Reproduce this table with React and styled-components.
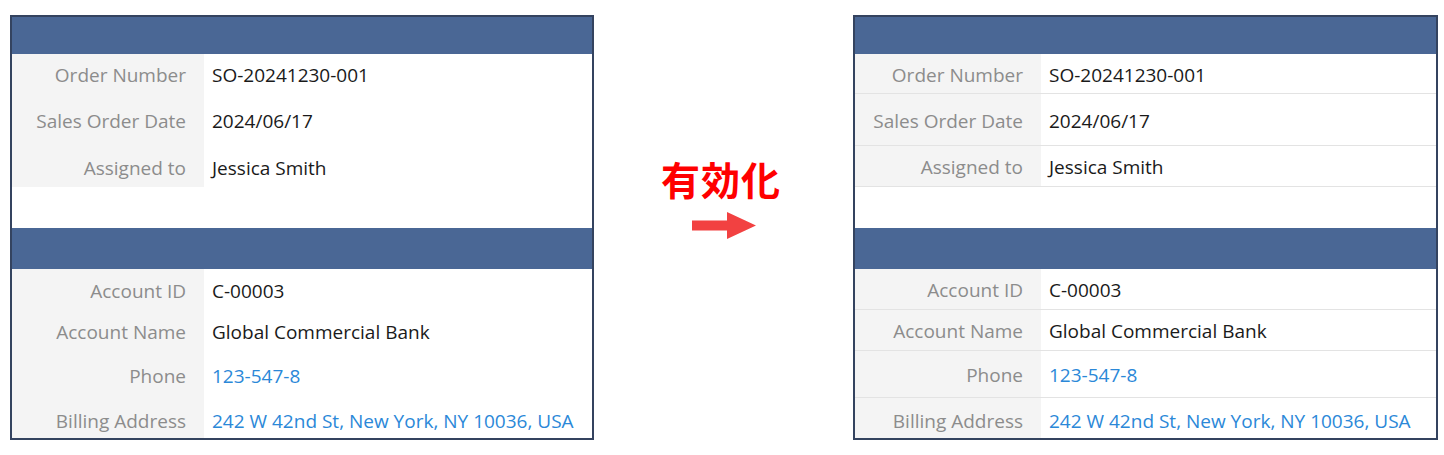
import styled, { createGlobalStyle } from "styled-components";

const GlobalStyle = createGlobalStyle`
  body {
    margin: 0;
    background: #ffffff;
    font-family: "Open Sans", "Noto Sans", sans-serif;
  }
`;

const Page = styled.div`
  display: flex;
  align-items: flex-start;
  padding: 15px 0 0 10px;
  width: 1444px;
  height: 455px;
  box-sizing: border-box;
`;

const Panel = styled.div`
  width: ${(p) => p.$w}px;
  border: 2px solid #34435f;
  box-sizing: border-box;
  background: #ffffff;
  display: flex;
  flex-direction: column;
`;

const SectionHeader = styled.div`
  height: ${(p) => p.$h}px;
  background: #4a6795;
`;

const Row = styled.div`
  display: grid;
  grid-template-columns: ${(p) => p.$label}px 1fr;
  height: ${(p) => p.$h}px;
  border-bottom: ${(p) => (p.$divided ? "1px solid #e3e3e3" : "none")};
  box-sizing: border-box;
`;

const Label = styled.div`
  background: #f4f4f4;
  color: #8c8c8c;
  font-size: 19px;
  display: flex;
  align-items: center;
  justify-content: flex-end;
  padding: ${(p) => p.$shift}px 18px 0 0;
`;

const Value = styled.div`
  color: ${(p) => (p.$link ? "#2b88d8" : "#1a1a1a")};
  font-size: 19px;
  display: flex;
  align-items: center;
  padding: ${(p) => p.$shift}px 0 0 8px;
  white-space: nowrap;
`;

const Spacer = styled.div`
  height: ${(p) => p.$h}px;
`;

const Middle = styled.div`
  width: 259px;
  display: flex;
  flex-direction: column;
  align-items: center;
  padding-top: 137px;
`;

const Caption = styled.div`
  color: #ff0000;
  font-family: "Noto Sans CJK JP", sans-serif;
  font-weight: 700;
  font-size: 39px;
  line-height: 52px;
  letter-spacing: 1px;
  margin-left: -5px;
`;

const Arrow = styled.svg`
  display: block;
  margin-top: 8px;
  margin-left: 1px;
`;

const orderRows = [
  { label: "Order Number", value: "SO-20241230-001", h: 40, shift: 2 },
  { label: "Sales Order Date", value: "2024/06/17", h: 52, shift: 2 },
  { label: "Assigned to", value: "Jessica Smith", h: 41, shift: 2 },
];

const accountRows = [
  { label: "Account ID", value: "C-00003", h: 41, shift: 2 },
  { label: "Account Name", value: "Global Commercial Bank", h: 41, shift: 2 },
  { label: "Phone", value: "123-547-8", h: 47, shift: 2, link: true },
  { label: "Billing Address", value: "242 W 42nd St, New York, NY 10036, USA", h: 40, shift: 5, link: true },
];

const FieldRow = ({ row, labelWidth, divided }) => (
  <Row $label={labelWidth} $h={row.h} $divided={divided}>
    <Label $shift={row.shift}>{row.label}</Label>
    <Value $shift={row.shift} $link={row.link}>
      {row.value}
    </Value>
  </Row>
);

const RecordPanel = ({ width, labelWidth, divided }) => (
  <Panel $w={width}>
    <SectionHeader $h={37} />
    {orderRows.map((r) => (
      <FieldRow key={r.label} row={r} labelWidth={labelWidth} divided={divided} />
    ))}
    <Spacer $h={41} />
    <SectionHeader $h={41} />
    {accountRows.map((r, i) => (
      <FieldRow
        key={r.label}
        row={r}
        labelWidth={labelWidth}
        divided={divided && i < accountRows.length - 1}
      />
    ))}
  </Panel>
);

export default function App() {
  return (
    <>
      <GlobalStyle />
      <Page>
        <RecordPanel width={584} labelWidth={192} />
        <Middle>
          <Caption>有効化</Caption>
          <Arrow width="64" height="27" viewBox="0 0 64 27">
            <path d="M0 8.5 H35 V0 L64 13.5 L35 27 V18.5 H0 Z" fill="#f24141" />
          </Arrow>
        </Middle>
        <RecordPanel width={585} labelWidth={186} divided />
      </Page>
    </>
  );
}
